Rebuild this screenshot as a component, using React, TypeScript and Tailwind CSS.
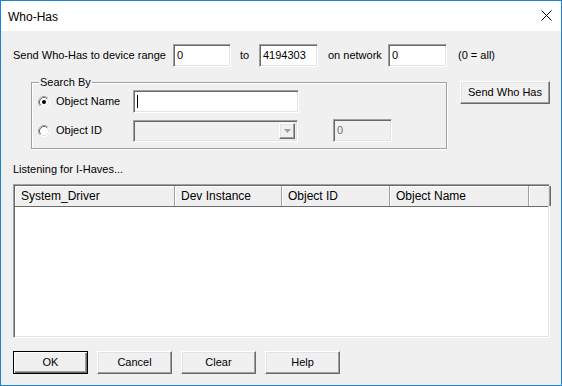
import React from "react";

const sunken =
  "border border-t-[#a0a0a0] border-l-[#a0a0a0] border-b-white border-r-white shadow-[inset_1px_1px_0_#696969,inset_-1px_-1px_0_#e3e3e3]";
const raised =
  "border border-t-white border-l-white border-b-[#696969] border-r-[#696969] shadow-[inset_-1px_-1px_0_#a0a0a0,inset_1px_1px_0_#e3e3e3]";

const Radio = ({ checked }: { checked?: boolean }) => (
  <svg width="12" height="12" viewBox="0 0 12 12" className="shrink-0">
    <circle cx="6" cy="6" r="5" fill="white" />
    <path d="M2.11 9.89 A5.5 5.5 0 0 1 9.89 2.11" fill="none" stroke="#a0a0a0" />
    <path d="M9.89 2.11 A5.5 5.5 0 0 1 2.11 9.89" fill="none" stroke="#ffffff" />
    <path d="M2.82 9.18 A4.5 4.5 0 0 1 9.18 2.82" fill="none" stroke="#696969" />
    <path d="M9.18 2.82 A4.5 4.5 0 0 1 2.82 9.18" fill="none" stroke="#e3e3e3" />
    {checked && <circle cx="6" cy="6" r="2" fill="#000" />}
  </svg>
);

const Field = ({ value, className }: { value?: string; className: string }) => (
  <div className={`h-[23px] bg-white flex items-center pl-[3px] ${sunken} ${className}`}>
    {value}
  </div>
);

const Button = ({
  label,
  isDefault,
  className = "",
}: {
  label: string;
  isDefault?: boolean;
  className?: string;
}) => (
  <div
    className={`h-[23px] flex items-center justify-center text-black ${
      isDefault
        ? "border border-black shadow-[inset_1px_1px_0_#fff,inset_-1px_-1px_0_#696969,inset_-2px_-2px_0_#a0a0a0]"
        : raised
    } ${className}`}
  >
    {label}
  </div>
);

const columns = [
  { label: "System_Driver", w: "w-[160px]" },
  { label: "Dev Instance", w: "w-[107px]" },
  { label: "Object ID", w: "w-[108px]" },
  { label: "Object Name", w: "w-[139px]" },
  { label: "", w: "w-[21px]" },
];

export default function App() {
  return (
    <div className="w-[562px] h-[386px] border border-[#1883d7] bg-[#f0f0f0] flex flex-col font-['Liberation_Sans',Arial,sans-serif] text-[11px] text-black overflow-hidden">
      {/* title bar */}
      <div className="h-[30px] bg-white flex items-center justify-between pl-[7px] pr-[9px] shrink-0">
        <span className="text-[12px] mt-[1px]">Who-Has</span>
        <svg width="11" height="11" viewBox="0 0 11 11" className="mt-[-1px]">
          <path d="M0.5 0.5 L10.5 10.5 M10.5 0.5 L0.5 10.5" stroke="#000" strokeWidth="1" />
        </svg>
      </div>

      <div className="flex flex-col pl-[12px]">
        {/* range row */}
        <div className="flex items-center mt-[13px] h-[23px]">
          <span className="w-[160px]">Send Who-Has to device range</span>
          <Field value="0" className="w-[58px]" />
          <span className="w-[28px] pl-[9px]">to</span>
          <Field value="4194303" className="w-[59px]" />
          <span className="w-[70px] pl-[10px]">on network</span>
          <Field value="0" className="w-[59px]" />
          <span className="pl-[11px]">(0 = all)</span>
        </div>

        {/* search by + send button */}
        <div className="flex items-start mt-[14px]">
          <div className="relative ml-[18px] mt-[1px] w-[416px] h-[67px] border border-[#a0a0a0] shadow-[inset_1px_1px_0_#fff,1px_1px_0_#fff]">
            <span className="absolute left-[7px] top-[-8px] px-[1px] bg-[#f0f0f0] leading-[14px]">
              Search By
            </span>
            <div className="flex flex-col pl-[6px] pt-[7px]">
              <div className="flex items-center h-[23px]">
                <Radio checked />
                <span className="ml-[6px] w-[77px]">Object Name</span>
                <div className={`relative h-[23px] w-[166px] bg-white ${sunken}`}>
                  <span className="absolute left-[3px] top-[4px] w-[1px] h-[13px] bg-black" />
                </div>
              </div>
              <div className="flex items-center h-[23px] mt-[6px]">
                <Radio />
                <span className="ml-[6px] w-[77px]">Object ID</span>
                <div className={`h-[22px] w-[165px] bg-[#f0f0f0] flex justify-end items-stretch p-[2px] ${sunken}`}>
                  <div className={`w-[16px] bg-[#f0f0f0] flex items-center justify-center ${raised}`}>
                    <svg width="7" height="4" viewBox="0 0 7 4">
                      <path d="M0 0 H7 L3.5 4 Z" fill="#a0a0a0" />
                    </svg>
                  </div>
                </div>
                <div className={`ml-[35px] h-[23px] w-[59px] bg-[#f0f0f0] pl-[3px] flex items-center text-[#6d6d6d] ${sunken}`}>
                  0
                </div>
              </div>
            </div>
          </div>
          <Button label="Send Who Has" className="ml-[13px] w-[90px]" />
        </div>

        <div className="mt-[14px] h-[13px] leading-[13px]">Listening for I-Haves...</div>

        {/* list view */}
        <div className={`mt-[8px] w-[537px] h-[154px] bg-white flex flex-col p-[1px] ${sunken}`}>
          <div className="flex h-[21px] bg-[#f0f0f0] border-b border-[#696969] text-[12px]">
            {columns.map((c, i) => (
              <div
                key={i}
                className={`${c.w} h-full flex items-center pl-[6px] border-r border-[#a0a0a0] shadow-[inset_1px_1px_0_#fff,1px_0_0_#696969] shrink-0`}
              >
                {c.label}
              </div>
            ))}
          </div>
          <div className="flex-1 bg-white" />
        </div>

        {/* buttons */}
        <div className="flex mt-[13px] gap-[9px]">
          <Button label="OK" isDefault className="w-[75px]" />
          <Button label="Cancel" className="w-[75px]" />
          <Button label="Clear" className="w-[75px]" />
          <Button label="Help" className="w-[75px]" />
        </div>
      </div>
    </div>
  );
}
